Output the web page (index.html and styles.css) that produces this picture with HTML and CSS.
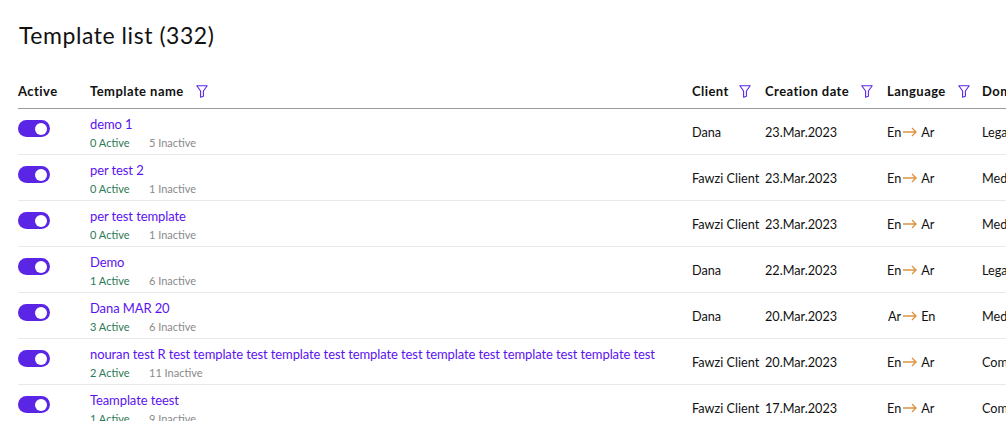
FILE: index.html
```html
<!DOCTYPE html>
<html lang="en">
<head>
<meta charset="utf-8">
<title>Template list</title>
<link rel="stylesheet" href="styles.css">
</head>
<body>
<main class="page">
  <h1 class="title">Template list (332)</h1>
  <svg class="defs" width="0" height="0" aria-hidden="true"><defs>
    <symbol id="funnel" viewBox="0 0 12 13"><path d="M0.8 0.8H11.2L7.4 6V11.2L4.6 12.2V6Z" fill="none" stroke="currentColor" stroke-width="1.1" stroke-linejoin="round"/></symbol>
    <symbol id="arrow" viewBox="0 0 14 10"><path d="M0 5H13M9 1L13 5L9 9" fill="none" stroke="currentColor" stroke-width="1.4"/></symbol>
  </defs></svg>
  <div class="table">
    <div class="row head">
      <div>Active</div>
      <div class="h-name">Template name <svg class="funnel"><use href="#funnel"/></svg></div>
      <div class="h-client">Client <svg class="funnel"><use href="#funnel"/></svg></div>
      <div class="h-date">Creation date <svg class="funnel"><use href="#funnel"/></svg></div>
      <div class="h-lang">Language <svg class="funnel"><use href="#funnel"/></svg></div>
      <div>Domain</div>
    </div>

    <div class="row">
      <div class="switch"><span class="toggle"></span></div>
      <div class="name"><a>demo 1</a><p class="counts"><span class="on">0 Active</span><span class="off">5 Inactive</span></p></div>
      <div>Dana</div><div>23.Mar.2023</div>
      <div class="lang">En<svg class="arrow"><use href="#arrow"/></svg>Ar</div><div>Legal</div>
    </div>
    <div class="row">
      <div class="switch"><span class="toggle"></span></div>
      <div class="name"><a>per test 2</a><p class="counts"><span class="on">0 Active</span><span class="off">1 Inactive</span></p></div>
      <div>Fawzi Client</div><div>23.Mar.2023</div>
      <div class="lang">En<svg class="arrow"><use href="#arrow"/></svg>Ar</div><div>Medical</div>
    </div>
    <div class="row">
      <div class="switch"><span class="toggle"></span></div>
      <div class="name"><a>per test template</a><p class="counts"><span class="on">0 Active</span><span class="off">1 Inactive</span></p></div>
      <div>Fawzi Client</div><div>23.Mar.2023</div>
      <div class="lang">En<svg class="arrow"><use href="#arrow"/></svg>Ar</div><div>Medical</div>
    </div>
    <div class="row">
      <div class="switch"><span class="toggle"></span></div>
      <div class="name"><a>Demo</a><p class="counts"><span class="on">1 Active</span><span class="off">6 Inactive</span></p></div>
      <div>Dana</div><div>22.Mar.2023</div>
      <div class="lang">En<svg class="arrow"><use href="#arrow"/></svg>Ar</div><div>Legal</div>
    </div>
    <div class="row">
      <div class="switch"><span class="toggle"></span></div>
      <div class="name"><a>Dana MAR 20</a><p class="counts"><span class="on">3 Active</span><span class="off">6 Inactive</span></p></div>
      <div>Dana</div><div>20.Mar.2023</div>
      <div class="lang rtl">Ar<svg class="arrow"><use href="#arrow"/></svg>En</div><div>Medical</div>
    </div>
    <div class="row">
      <div class="switch"><span class="toggle"></span></div>
      <div class="name"><a>nouran test R test template test template test template test template test template test template test</a><p class="counts"><span class="on">2 Active</span><span class="off">11 Inactive</span></p></div>
      <div>Fawzi Client</div><div>20.Mar.2023</div>
      <div class="lang">En<svg class="arrow"><use href="#arrow"/></svg>Ar</div><div>Commercial</div>
    </div>
    <div class="row">
      <div class="switch"><span class="toggle"></span></div>
      <div class="name"><a>Teamplate teest</a><p class="counts"><span class="on">1 Active</span><span class="off">9 Inactive</span></p></div>
      <div>Fawzi Client</div><div>17.Mar.2023</div>
      <div class="lang">En<svg class="arrow"><use href="#arrow"/></svg>Ar</div><div>Commercial</div>
    </div>
  </div>
</main>
</body>
</html>
```
FILE: styles.css
```css
* { box-sizing: border-box; }
html, body { margin: 0; height: 100%; overflow: hidden; background: #fff; }
body { font-family: "Lato", "Liberation Sans", sans-serif; color: #111; }
.page { padding: 21px 0 0 18px; width: 1006px; height: 421px; overflow: hidden; }
.title { margin: 0 0 0 1px; font-size: 23px; line-height: 28px; font-weight: 400; letter-spacing: 0.55px; color: #111; }
.defs { position: absolute; }
.table { margin-top: 28px; width: 1100px; }
.row {
  display: grid;
  grid-template-columns: 72px 602px 73px 122px 95px 1fr;
  height: 46px;
  align-items: center;
  font-size: 12.7px;
  border-bottom: 1px solid #e9e9ec;
}
.head {
  height: 32px;
  padding-bottom: 3px;
  border-bottom: 1px solid #9a9a9a;
  font-size: 13px;
  font-weight: 700;
  letter-spacing: 0.45px;
}
.funnel { width: 12px; height: 13px; color: #5b25e6; vertical-align: -2px; }
.h-name .funnel { margin-left: 9px; }
.h-client .funnel { margin-left: 7px; }
.h-date .funnel { margin-left: 8px; }
.h-lang .funnel { margin-left: 9px; }
.switch { align-self: start; padding-top: 11px; }
.toggle {
  display: block;
  position: relative;
  width: 32px;
  height: 17px;
  border-radius: 9px;
  background: #5b25e6;
}
.toggle::after {
  content: "";
  position: absolute;
  right: 3px;
  top: 2.5px;
  width: 12px;
  height: 12px;
  border-radius: 50%;
  background: #fff;
}
.name { align-self: start; padding-top: 7px; }
.name a { display: block; color: #5b12f0; font-size: 13px; line-height: 16px; letter-spacing: -0.1px; white-space: nowrap; }
.counts { margin: 4px 0 0; font-size: 11px; line-height: 14px; display: flex; }
.on { color: #2c7a55; width: 45px; margin-right: 14px; white-space: nowrap; }
.off { color: #8a8a8a; }
.lang { display: flex; align-items: center; }
.lang.rtl { padding-left: 1px; }
.arrow { width: 14px; height: 10px; color: #dd9440; margin: 0 4px 0 2px; }
```
